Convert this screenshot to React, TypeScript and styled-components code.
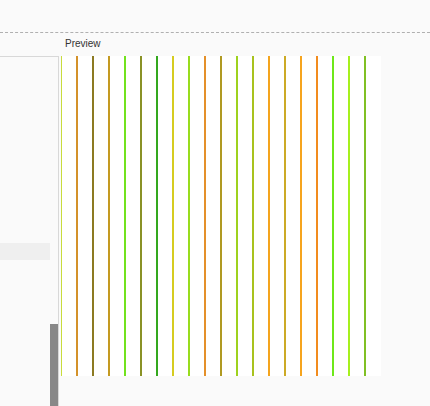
import React from "react";
import styled, { createGlobalStyle } from "styled-components";

const Global = createGlobalStyle`
  html, body { margin: 0; padding: 0; background: #fafafa; overflow: hidden; }
  body { font-family: "Liberation Sans", Arial, sans-serif; }
`;

const Page = styled.div`
  width: 430px;
  height: 406px;
  display: flex;
  flex-direction: column;
  background: #fafafa;
  overflow: hidden;
`;

const TopBar = styled.div`
  height: 32px;
  border-bottom: 1px dashed #b0b0b0;
  flex-shrink: 0;
`;

const Body = styled.div`
  display: flex;
  gap: 2px;
  flex: 1;
  min-height: 0;
`;

const SidePanel = styled.div`
  width: 58px;
  margin-top: 23px;
  border-top: 1px solid #d8d8d8;
  border-right: 1px solid #d8d8d8;
  display: flex;
`;

const ListArea = styled.div`
  flex: 1;
  display: flex;
  flex-direction: column;
  padding-top: 186px;
`;

const ListRow = styled.div<{ $selected?: boolean }>`
  height: 17px;
  background: ${(p) => (p.$selected ? "#efefef" : "transparent")};
`;

const ScrollTrack = styled.div`
  width: 8px;
  display: flex;
  flex-direction: column;
  padding-top: 267px;
`;

const ScrollThumb = styled.div`
  flex: 1;
  background: #888888;
`;

const PreviewColumn = styled.div`
  display: flex;
  flex-direction: column;
`;

const PreviewLabel = styled.div`
  height: 23px;
  box-sizing: border-box;
  padding: 5px 0 0 4px;
  font-size: 10px;
  color: #333;
  line-height: 12px;
`;

const Canvas = styled.div`
  width: 320px;
  height: 320px;
  background: #ffffff;
  overflow: hidden;
`;

const colors = [
  "#c8dc3c", "#d4922a", "#8c7a22", "#c49a22", "#72e21e",
  "#8a9226", "#34a81e", "#d6cc20", "#98dc1e", "#e4902a",
  "#b09a22", "#9ed21e", "#a8c21e", "#f4a41e", "#ccaa26",
  "#f6a41e", "#f28c1e", "#6ee81a", "#a6f01e", "#80c024",
];

export default function App() {
  return (
    <>
      <Global />
      <Page>
        <TopBar />
        <Body>
          <SidePanel>
            <ListArea>
              <ListRow $selected />
            </ListArea>
            <ScrollTrack>
              <ScrollThumb />
            </ScrollTrack>
          </SidePanel>
          <PreviewColumn>
            <PreviewLabel>Preview</PreviewLabel>
            <Canvas>
              <svg width="320" height="320" viewBox="0 0 320 320">
                {colors.map((c, i) => (
                  <rect key={i} x={i * 16 - 1} y={0} width={2} height={320} fill={c} />
                ))}
              </svg>
            </Canvas>
          </PreviewColumn>
        </Body>
      </Page>
    </>
  );
}
